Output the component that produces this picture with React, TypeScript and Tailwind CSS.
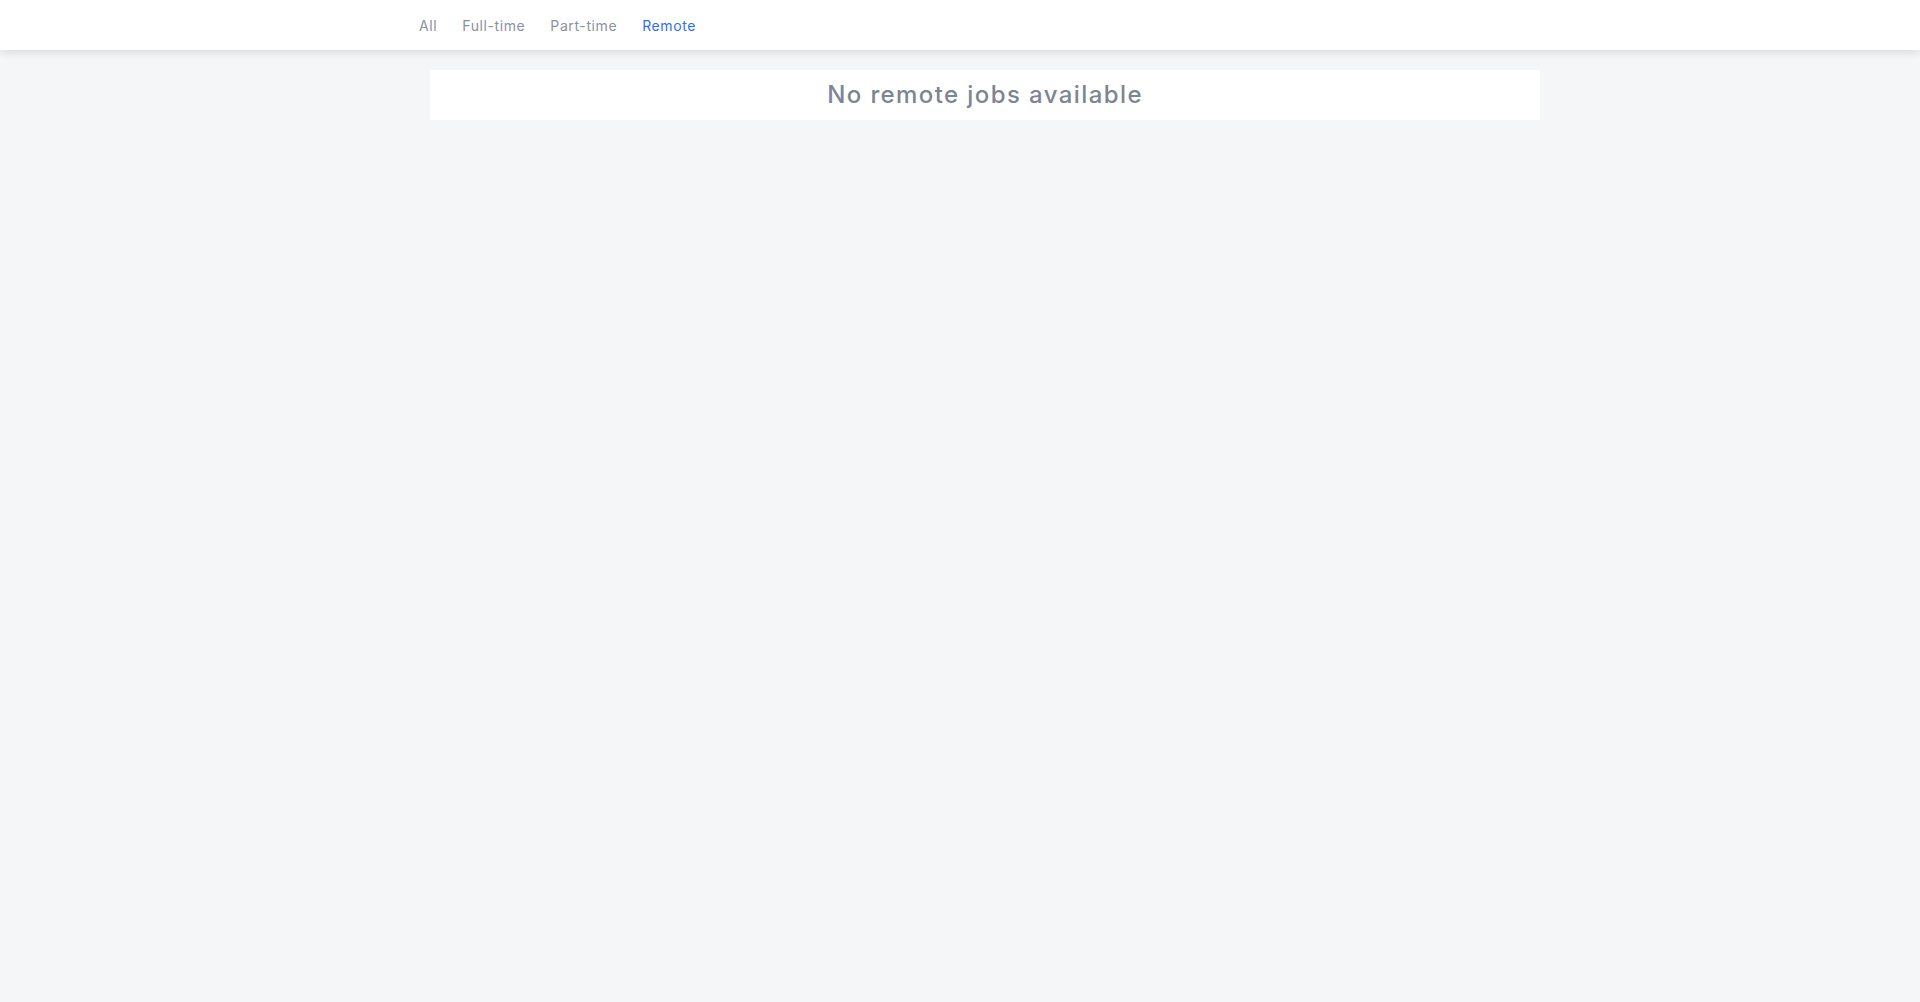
import React, { useState } from "react";

const tabs = ["All", "Full-time", "Part-time", "Remote"];

function App() {
  const [active, setActive] = useState<string>("Remote");

  return (
    <div
      className="min-h-[1002px] bg-[#f5f6f8]"
      style={{ fontFamily: "Inter, 'Noto Sans', sans-serif" }}
    >
      <header className="h-[50px] bg-white shadow-[0_2px_10px_rgba(0,0,0,0.12)]">
        <nav className="ml-[419px] flex h-full items-center gap-[25px] text-[14px] tracking-[0.6px]">
          {tabs.map((tab) => (
            <button
              key={tab}
              onClick={() => setActive(tab)}
              className={
                active === tab ? "text-[#2f6bff]" : "text-[#8a919e]"
              }
            >
              {tab}
            </button>
          ))}
        </nav>
      </header>

      <main className="ml-[430px] mt-[20px] w-[1110px]">
        <div className="flex h-[50px] items-center justify-center bg-white">
          <h2 className="text-[24px] font-medium tracking-[1.4px] text-[#7d8593]">
            No {active === "All" ? "" : active.toLowerCase() + " "}jobs
            available
          </h2>
        </div>
      </main>
    </div>
  );
}

export default App;
